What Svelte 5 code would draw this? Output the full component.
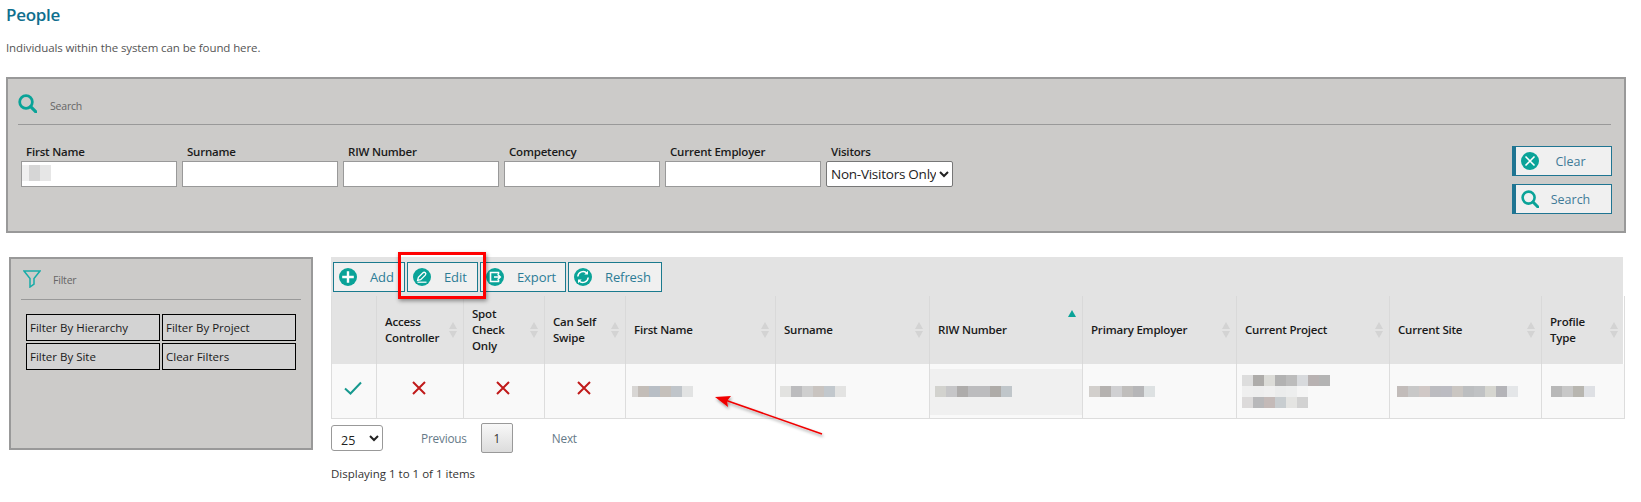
<script>
  const fields = ['First Name', 'Surname', 'RIW Number', 'Competency', 'Current Employer'];
  const filters = ['Filter By Hierarchy', 'Filter By Project', 'Filter By Site', 'Clear Filters'];
  const cols = [
    { w: 45, label: [] },
    { w: 87, label: ['Access', 'Controller'], sort: true },
    { w: 81, label: ['Spot', 'Check', 'Only'], sort: true },
    { w: 81, label: ['Can Self', 'Swipe'], sort: true },
    { w: 150, label: ['First Name'], sort: true },
    { w: 154, label: ['Surname'], sort: true },
    { w: 153, label: ['RIW Number'], asc: true },
    { w: 154, label: ['Primary Employer'], sort: true },
    { w: 153, label: ['Current Project'], sort: true },
    { w: 152, label: ['Current Site'], sort: true },
    { w: 83, label: ['Profile', 'Type'], sort: true }
  ];
  const cells = [
    { pad: 6, narrow: true, lines: [['d8d6d4','c3bdb8','b8bec5','c5c0bb','c0c5ca','e2e3e3']] },
    { pad: 4, lines: [['e2e2e0','bcbcbe','cfcfcf','c9c4c0','c2c8cd','e3e3e2']] },
    { pad: 5, tint: true, lines: [['d2d2ce','c6c6c8','aeacab','bcbcbe','bcbcbe','aeaba8','c0c6ca']] },
    { pad: 6, lines: [['d2cfcc','b5b2b0','d0d0d2','c0bebc','b6b6b8','dde1e2']] },
    { pad: 5, lines: [['dddddd','aeacaa','dcdcd8','b2b2b2','bcbcbc','d8dadd','b8b2b2','b4b4b4'],['efefef','eeeeee','f0f0f0','ebecec','edeeee','f5f5f5'],['dcdada','b8b8ba','c4bab8','c8cdd0','e4e4e2','d2d2d2']] },
    { pad: 7, lines: [['c2bcba','c8c8c8','d0c8c6','bcbcc0','bcbcc2','cac6c2','bcbec0','c0c2c4','d6d6d0','b4b4b8','e4e6e8']] },
    { pad: 9, lines: [['b8b8b8','c8c8c8','b8b6b0','dee0e4']] }
  ];
  const inputBlur = ['f0f0f0','d6d6d6','e6e6e6'];
</script>

{#snippet searchIcon()}
  <svg class="ico" viewBox="0 0 18 18"><circle cx="7.6" cy="7.6" r="6" fill="none" stroke="#0aa398" stroke-width="2.6"/><path d="M12 12l5 5" stroke="#0aa398" stroke-width="3" stroke-linecap="round"/></svg>
{/snippet}
{#snippet clearIcon()}
  <svg class="ico" viewBox="0 0 18 18"><circle cx="9" cy="9" r="9" fill="#0aa398"/><path d="M4.5 4.5l9 9M13.5 4.5l-9 9" stroke="#fff" stroke-width="1.6"/></svg>
{/snippet}
{#snippet addIcon()}
  <svg class="ico" viewBox="0 0 18 18"><circle cx="9" cy="9" r="9" fill="#0aa398"/><path d="M9 3.200v11.600M3.200 9h11.600" stroke="#fff" stroke-width="2.400"/></svg>
{/snippet}
{#snippet editIcon()}
  <svg class="ico" viewBox="0 0 18 18"><circle cx="9" cy="9" r="9" fill="#0aa398"/><path d="M4.600 12.400l.8-3 4.600-4.600a1.600 1.600 0 0 1 2.300 2.300L7.700 11.700l-3.100.7z" fill="none" stroke="#fff" stroke-width="1.300"/><path d="M4.500 14.200h9" stroke="#fff" stroke-width="1.200"/></svg>
{/snippet}
{#snippet exportIcon()}
  <svg class="ico" viewBox="0 0 18 18"><circle cx="9" cy="9" r="9" fill="#0aa398"/><path d="M12.500 6V4.500H4.500v9h8V12" fill="none" stroke="#fff" stroke-width="1.600"/><path d="M8 9h6M11.600 6.300L14.300 9l-2.700 2.700" fill="none" stroke="#fff" stroke-width="1.500"/></svg>
{/snippet}
{#snippet refreshIcon()}
  <svg class="ico" viewBox="0 0 18 18"><circle cx="9" cy="9" r="9" fill="#0aa398"/><path d="M3.800 8.500A5.300 5.300 0 0 1 13 5.300M14.200 9.500A5.300 5.300 0 0 1 5 12.700" fill="none" stroke="#fff" stroke-width="1.500"/><path d="M14 2.800v3.700h-3.700zM4 15.200v-3.700h3.700z" fill="#fff"/></svg>
{/snippet}

<div class="page">
  <h1>People</h1>
  <p class="intro">Individuals within the system can be found here.</p>

  <section class="search">
    <div class="head">
      <svg class="headico" viewBox="0 0 18 18"><circle cx="7.600" cy="7.600" r="6" fill="none" stroke="#0aa398" stroke-width="2.600"/><path d="M12 12l5 5" stroke="#0aa398" stroke-width="3" stroke-linecap="round"/></svg>
      <span>Search</span>
    </div>
    <div class="searchbody">
      <div class="fields">
        {#each fields as f, i}
          <label class="field">
            <span class="lab">{f}</span>
            <span class="inputwrap">
              <input type="text" />
              {#if i === 0}
                <span class="inputblur">{#each inputBlur as c}<i style="background:#{c}"></i>{/each}</span>
              {/if}
            </span>
          </label>
        {/each}
        <label class="field vis">
          <span class="lab">Visitors</span>
          <select><option>Non-Visitors Only</option></select>
        </label>
      </div>
      <div class="actions">
        <button class="act">{@render clearIcon()}<span>Clear</span></button>
        <button class="act">{@render searchIcon()}<span>Search</span></button>
      </div>
    </div>
  </section>

  <div class="lower">
    <aside class="filter">
      <div class="head">
        <svg class="funnel" viewBox="0 0 18 18"><path d="M1 1h16l-6 7.500v5.500l-4 3v-8.500z" fill="none" stroke="#18aca8" stroke-width="1.500"/></svg>
        <span>Filter</span>
      </div>
      <div class="fbtns">
        {#each filters as f}<button class="fbtn">{f}</button>{/each}
      </div>
    </aside>

    <main class="main">
      <div class="grid">
        <div class="toolbar">
          <button class="tb add">{@render addIcon()}<span>Add</span></button>
          <button class="tb edit">{@render editIcon()}<span>Edit</span></button>
          <button class="tb exp">{@render exportIcon()}<span>Export</span></button>
          <button class="tb ref">{@render refreshIcon()}<span>Refresh</span></button>
        </div>
        <table>
          <colgroup>{#each cols as c}<col style="width:{c.w}px" />{/each}</colgroup>
          <thead>
            <tr>
              {#each cols as c}
                <th>
                  <div class="thin">
                    <span>{#each c.label as l}<span class="ln">{l}</span>{/each}</span>
                    {#if c.sort}
                      <svg class="sort" viewBox="0 0 8 16"><path d="M4 0l4 7H0zM4 16l4-7H0z" fill="#d3d3d3"/></svg>
                    {:else if c.asc}
                      <svg class="asc" viewBox="0 0 8 7"><path d="M4 0l4 7H0z" fill="#0aa398"/></svg>
                    {/if}
                  </div>
                </th>
              {/each}
            </tr>
          </thead>
          <tbody>
            <tr>
              <td class="c"><svg class="mark" viewBox="0 0 18 14"><path d="M1 7.500l5.500 5L17 1.500" fill="none" stroke="#17998f" stroke-width="2"/></svg></td>
              {#each [0,1,2] as _}
                <td class="c"><svg class="mark x" viewBox="0 0 14 14"><path d="M1 1l12 12M13 1L1 13" stroke="#c01a1a" stroke-width="2"/></svg></td>
              {/each}
              {#each cells as cell}
                <td class:tint={cell.tint} class:narrow={cell.narrow} style="padding-left:{cell.pad}px">
                  {#each cell.lines as line}
                    <div class="blur">{#each line as c}<i style="background:#{c}"></i>{/each}</div>
                  {/each}
                </td>
              {/each}
            </tr>
          </tbody>
        </table>
      </div>

      <div class="pager">
        <select class="size"><option>25</option></select>
        <span class="pv">Previous</span>
        <span class="pg">1</span>
        <span class="nx">Next</span>
      </div>
      <p class="count">Displaying 1 to 1 of 1 items</p>
    </main>
  </div>

  <div class="redbox"></div>
  <svg class="arrow" viewBox="0 0 130 60" width="130" height="60">
    <defs>
      <filter id="sh" x="-20%" y="-40%" width="140%" height="180%"><feDropShadow dx="1" dy="2" stdDeviation="1.500" flood-color="#000" flood-opacity="0.4"/></filter>
    </defs>
    <g filter="url(#sh)">
      <path d="M112 42L15 8" stroke="#f00000" stroke-width="1.600" fill="none"/>
      <path d="M5 5l16-1-4 5 1 6z" fill="#f00000"/>
    </g>
  </svg>
</div>

<style>
  :global(body) { margin: 0; background: #fff; overflow: hidden; }
  .page {
    position: relative;
    width: 1641px;
    height: 502px;
    overflow: hidden;
    font-family: "Open Sans", "Noto Sans", sans-serif;
    font-size: 11.500px;
    letter-spacing: -0.200px;
    color: #333;
  }
  h1 {
    margin: 0;
    padding: 4px 0 0 6px;
    font-size: 17px;
    line-height: 21px;
    font-weight: 600;
    letter-spacing: -0.300px;
    color: #0f6f8e;
  }
  .intro {
    margin: 15px 0 0 6px;
    line-height: 16px;
    letter-spacing: -0.100px;
    color: #555;
  }
  .search {
    box-sizing: border-box;
    width: 1620px;
    height: 156px;
    margin: 21px 0 0 6px;
    padding: 0 13px 0 10px;
    background: #cccbc9;
    border: 2px solid #999;
  }
  .head {
    display: flex;
    align-items: center;
    height: 45px;
    border-bottom: 1px solid #999;
    color: #666;
    font-size: 10.500px;
  }
  .headico { width: 19px; height: 19px; margin-right: 13px; margin-top: 4px; }
  .head span { margin-top: 8px; }
  .searchbody { display: flex; justify-content: space-between; }
  .fields { display: flex; gap: 5px; margin: 19px 0 0 3px; }
  .field { display: flex; flex-direction: column; }
  .lab {
    padding-left: 5px;
    height: 17px;
    line-height: 16px;
    font-weight: 600;
    color: #1a1a1a;
  }
  .inputwrap { position: relative; display: block; }
  input {
    display: block;
    box-sizing: border-box;
    width: 156px;
    height: 26px;
    margin: 0;
    border: 1px solid #999;
    background: #fff;
  }
  .inputblur { position: absolute; left: 1px; top: 4px; display: flex; }
  .inputblur i { width: 11px; height: 16px; }
  .inputblur i:first-child { width: 7px; }
  select {
    box-sizing: border-box;
    font-family: inherit;
  }
  .vis select {
    width: 127px;
    height: 26px;
    font-size: 13.500px;
    letter-spacing: -0.250px;
    border: 1px solid #777;
    border-radius: 2px;
    background: #fff;
    color: #222;
    padding: 0;
  }
  .actions {
    display: flex;
    flex-direction: column;
    gap: 8px;
    margin: 21px -1px 0 0;
  }
  .act {
    box-sizing: border-box;
    display: flex;
    align-items: center;
    width: 100px;
    height: 30px;
    padding: 0 9px 0 5px;
    border: 1px solid #1f7592;
    border-left-width: 4px;
    background: #f0f0f0;
    font: inherit;
    font-size: 12.500px;
    color: #3f7a97;
  }
  .act span { flex: 1; text-align: center; }
  .ico { width: 18px; height: 18px; flex: none; }
  .lower { display: flex; margin-top: 24px; }
  .filter {
    box-sizing: border-box;
    width: 304px;
    height: 193px;
    margin-left: 9px;
    padding: 0 10px;
    background: #cccbc9;
    border: 2px solid #999;
  }
  .filter .head { height: 40px; }
  .funnel { width: 18px; height: 18px; margin: 0 12px 0 2px; }
  .filter .head span { margin-top: 2px; }
  .fbtns {
    display: grid;
    grid-template-columns: 134px 134px;
    gap: 2px;
    margin: 14px 0 0 5px;
  }
  .fbtn {
    box-sizing: border-box;
    height: 27px;
    padding: 0 0 0 3px;
    text-align: left;
    border: 1px solid #000;
    background: #d3d3d3;
    font: inherit;
    color: #1a1a1a;
  }
  .main { margin-left: 18px; width: 1292px; }
  .grid { background: #e3e3e3; }
  .toolbar { display: flex; gap: 2px; padding: 5px 0 4px 2px; height: 30px; }
  .tb {
    box-sizing: border-box;
    display: flex;
    align-items: center;
    gap: 13px;
    height: 30px;
    padding: 0 0 0 5px;
    border: 1px solid #1a7a8e;
    background: #f0f0f0;
    font: inherit;
    font-size: 13px;
    letter-spacing: -0.100px;
    color: #2c7c96;
    white-space: nowrap;
  }
  .add { width: 72px; }
  .edit { width: 71px; }
  .exp { width: 86px; }
  .ref { width: 94px; }
  table {
    table-layout: fixed;
    width: 1292px;
    border-collapse: collapse;
    border-bottom: 1px solid #ddd;
    border-left: 1px solid #ddd;
    border-right: 1px solid #ddd;
    box-sizing: border-box;
  }
  th {
    height: 68px;
    padding: 0 6px 0 8px;
    text-align: left;
    font-weight: 600;
    color: #1a1a1a;
    border-left: 1px solid #d9d9d9;
  }
  th:first-child, td:first-child { border-left: none; }
  .thin { display: flex; justify-content: space-between; align-items: center; }
  .ln { display: block; line-height: 16px; }
  .sort { width: 8px; height: 16px; flex: none; }
  .asc { width: 8px; height: 7px; flex: none; align-self: flex-start; margin-top: -12px; }
  td {
    height: 54px;
    padding: 0;
    background: #f9f9f9;
    border-left: 1px solid #ddd;
    vertical-align: middle;
  }
  td.c { text-align: center; padding-right: 2px; }
  td.tint { background: linear-gradient(#f9f9f9 5px, #f0f0f0 5px, #f0f0f0 calc(100% - 3px), #f9f9f9 calc(100% - 3px)); }
  .mark { width: 18px; height: 14px; display: block; margin: -6px auto 0; }
  .mark.x { width: 14px; }
  .blur { display: flex; height: 11px; }
  .blur i { width: 11px; height: 11px; }
  .narrow .blur i:first-child { width: 6px; }
  .pager { display: flex; align-items: center; height: 30px; margin-top: 4px; color: #667; font-size: 11.800px; }
  .size {
    width: 52px;
    height: 26px;
    font-size: 12.500px;
    border: 1px solid #999;
    border-radius: 3px;
    background: #fff;
    color: #222;
    padding: 4px 0 0 5px;
  }
  .pv { margin-left: 38px; color: #667a88; }
  .pg {
    box-sizing: border-box;
    width: 32px;
    height: 30px;
    margin-left: 14px;
    display: flex;
    align-items: center;
    justify-content: center;
    border: 1px solid #999;
    border-radius: 2px;
    background: linear-gradient(#f8f8f8, #dcdcdc);
    color: #333;
  }
  .nx { margin-left: 39px; color: #667a88; }
  .count { margin: 13px 0 0; line-height: 16px; letter-spacing: 0; color: #333; }
  .redbox {
    position: absolute;
    left: 398px;
    top: 252px;
    width: 88px;
    height: 47px;
    box-sizing: border-box;
    border: 3px solid #f00;
    box-shadow: 1px 2px 4px rgba(0,0,0,.4);
  }
  .arrow { position: absolute; left: 710px; top: 392px; }
</style>
